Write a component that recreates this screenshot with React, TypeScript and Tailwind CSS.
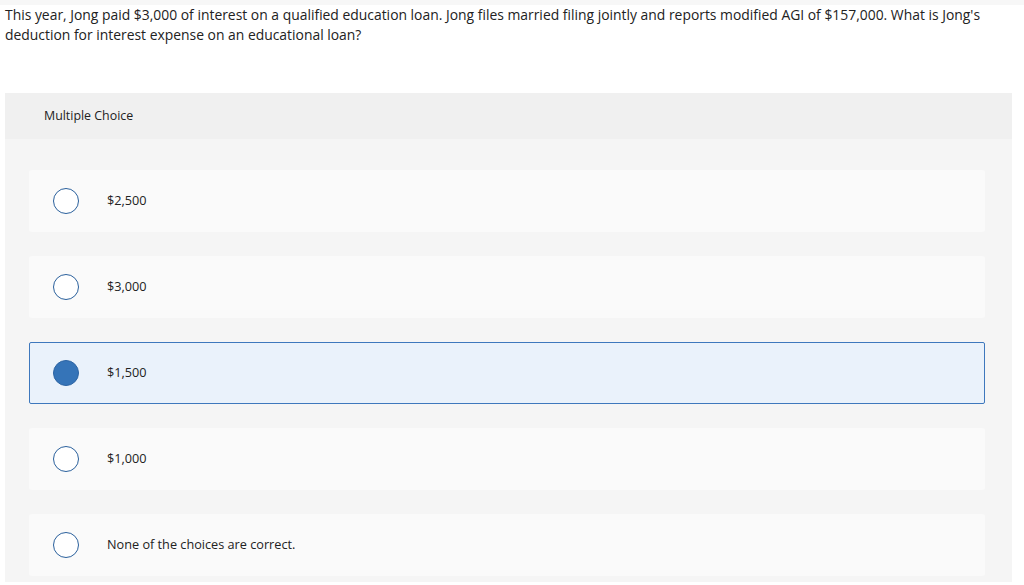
import React from "react";

const options = [
  { label: "$2,500", selected: false },
  { label: "$3,000", selected: false },
  { label: "$1,500", selected: true },
  { label: "$1,000", selected: false },
  { label: "None of the choices are correct.", selected: false },
];

export default function App() {
  return (
    <div
      className="w-[1024px] h-[585px] bg-white overflow-hidden text-[#1f1f1f]"
      style={{ fontFamily: "'Open Sans', sans-serif" }}
    >
      <div className="h-[5px] bg-[#f7f7f7]" />
      <p className="px-[5px] text-[13.9px] leading-[19.5px] text-[#222]">
        This year, Jong paid $3,000 of interest on a qualified education loan. Jong files married filing jointly and reports modified AGI of $157,000. What is Jong's deduction for interest expense on an educational loan?
      </p>
      <div className="ml-[5px] mt-[49px] w-[1007px] bg-[#f5f5f5]">
        <div className="h-[46px] bg-[#f0f0f0] flex items-center pl-[39px] text-[12.4px] text-[#222]">
          Multiple Choice
        </div>
        <div className="pt-[31px] pl-[24px] pr-[27px] flex flex-col gap-[24px] pb-[6px]">
          {options.map((o) => (
            <div
              key={o.label}
              className={
                o.selected
                  ? "h-[62px] rounded-[2px] border border-[#3e78bd] bg-[#eaf2fb] flex items-center pl-[23px]"
                  : "h-[62px] rounded-[3px] border border-transparent bg-[#fafafa] flex items-center pl-[23px]"
              }
            >
              {o.selected ? (
                <span className="w-[26px] h-[26px] rounded-full bg-[#3574b8] border border-[#2c64a3]" />
              ) : (
                <span className="w-[26px] h-[26px] rounded-full bg-white border-[1.5px] border-[#2a609c]" />
              )}
              <span className="ml-[28px] text-[12.7px] text-[#222]">{o.label}</span>
            </div>
          ))}
        </div>
      </div>
    </div>
  );
}
